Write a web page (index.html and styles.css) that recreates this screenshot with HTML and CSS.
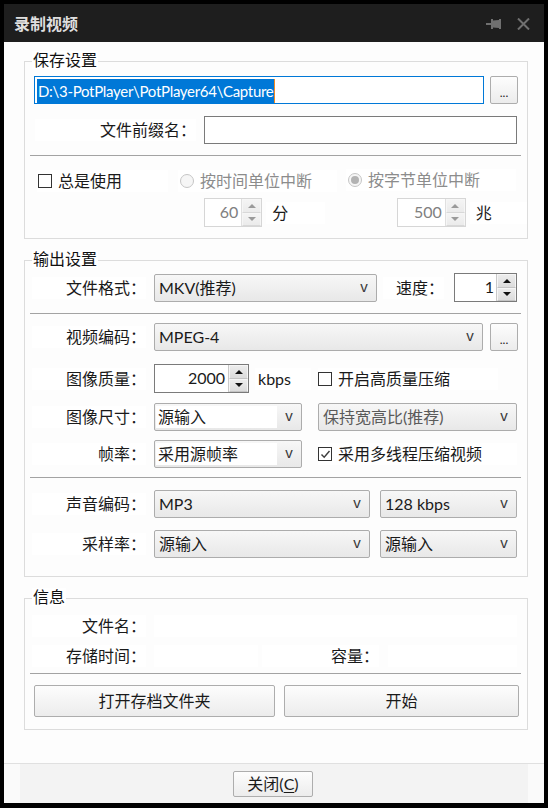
FILE: index.html
```html
<!DOCTYPE html>
<html lang="zh-CN">
<head>
<meta charset="utf-8">
<title>录制视频</title>
<link rel="stylesheet" href="styles.css">
</head>
<body>
<div class="window">
  <div class="titlebar">
    <span class="title">录制视频</span>
    <div class="title-icons">
      <svg class="pin" width="16" height="10" viewBox="0 0 16 10">
        <rect x="0" y="4" width="6" height="2" fill="#707070"/>
        <rect x="5" y="0" width="2" height="10" fill="#707070"/>
        <polygon points="7,1.5 13,1 13,9 7,8.5" fill="#707070"/>
        <rect x="13" y="0" width="2" height="10" fill="#707070"/>
      </svg>
      <svg class="xbtn" width="13" height="12" viewBox="0 0 13 12">
        <path d="M1 0.5 L12 11.5 M12 0.5 L1 11.5" stroke="#707070" stroke-width="2" fill="none"/>
      </svg>
    </div>
  </div>

  <div class="content">
    <section class="group g-save">
      <div class="group-title">保存设置</div>
      <div class="row r-path">
        <div class="textbox path"><span class="sel">D:\3-PotPlayer\PotPlayer64\Capture</span></div>
        <div class="btn dots">...</div>
      </div>
      <div class="row r-prefix">
        <span class="lbl-prefix">文件前缀名：</span>
        <div class="textbox prefix"></div>
      </div>
      <div class="sep"></div>
      <div class="row r-opts">
        <div class="check c-always"><span class="cbox"></span><span>总是使用</span></div>
        <div class="radio disabled r-time"><span class="rcircle"></span><span>按时间单位中断</span></div>
        <div class="radio disabled checked r-byte"><span class="rcircle"><span class="dot"></span></span><span>按字节单位中断</span></div>
      </div>
      <div class="row r-spins">
        <div class="spin disabled s60"><span class="val">60</span><span class="arrows"><span class="up"></span><span class="down"></span></span></div>
        <span class="unit">分</span>
        <div class="spin disabled s500"><span class="val">500</span><span class="arrows"><span class="up"></span><span class="down"></span></span></div>
        <span class="unit">兆</span>
      </div>
    </section>

    <section class="group g-out">
      <div class="group-title">输出设置</div>
      <div class="row h29">
        <span class="lbl">文件格式：</span>
        <div class="combo w223"><span class="txt">MKV(推荐)</span><span class="arrow">v</span></div>
        <span class="lbl-speed">速度：</span>
        <div class="spin s-speed"><span class="val">1</span><span class="arrows"><span class="up"></span><span class="down"></span></span></div>
      </div>
      <div class="sep s1"></div>
      <div class="row r-vcodec">
        <span class="lbl">视频编码：</span>
        <div class="combo w329"><span class="txt">MPEG-4</span><span class="arrow">v</span></div>
        <div class="btn dots">...</div>
      </div>
      <div class="row h29 r-quality">
        <span class="lbl">图像质量：</span>
        <div class="spin s-quality"><span class="val">2000</span><span class="arrows"><span class="up"></span><span class="down"></span></span></div>
        <span class="unit-kbps">kbps</span>
        <div class="check"><span class="cbox"></span><span>开启高质量压缩</span></div>
      </div>
      <div class="row r-size">
        <span class="lbl">图像尺寸：</span>
        <div class="combo editable w148"><span class="txt">源输入</span><span class="arrow">v</span></div>
        <div class="combo w199 ml16 dim"><span class="txt">保持宽高比(推荐)</span><span class="arrow">v</span></div>
      </div>
      <div class="row r-fps">
        <span class="lbl">帧率：</span>
        <div class="combo editable w148"><span class="txt">采用源帧率</span><span class="arrow">v</span></div>
        <div class="check ml16"><span class="cbox checked"><svg width="11" height="11" viewBox="0 0 11 11"><path d="M1.5 5.5 L4.2 8.3 L9.5 2" stroke="#3c3c3c" stroke-width="1.4" fill="none"/></svg></span><span>采用多线程压缩视频</span></div>
      </div>
      <div class="sep s2"></div>
      <div class="row r-acodec">
        <span class="lbl">声音编码：</span>
        <div class="combo w216"><span class="txt">MP3</span><span class="arrow">v</span></div>
        <div class="combo w137 ml10"><span class="txt">128 kbps</span><span class="arrow">v</span></div>
      </div>
      <div class="row r-rate">
        <span class="lbl">采样率：</span>
        <div class="combo w216"><span class="txt">源输入</span><span class="arrow">v</span></div>
        <div class="combo w137 ml10"><span class="txt">源输入</span><span class="arrow">v</span></div>
      </div>
    </section>

    <section class="group g-info">
      <div class="group-title">信息</div>
      <div class="row r-info1">
        <span class="lbl">文件名：</span>
        <span class="value v-name"></span>
      </div>
      <div class="row r-info2">
        <span class="lbl">存储时间：</span>
        <span class="value v-time"></span>
        <span class="lbl-size">容量：</span>
        <span class="value v-size"></span>
      </div>
      <div class="sep s3"></div>
      <div class="row r-buttons">
        <div class="btn big b-open">打开存档文件夹</div>
        <div class="btn big b-start">开始</div>
      </div>
    </section>
  </div>

  <div class="footer">
    <div class="footer-inner">
      <div class="btn close-btn">关闭(<u>C</u>)</div>
    </div>
  </div>
</div>
</body>
</html>
```

FILE: styles.css
```css
* { box-sizing: border-box; }
html, body { margin: 0; padding: 0; }
body {
  background: #000;
  width: 548px;
  height: 808px;
  overflow: hidden;
  font-family: Lato, "Noto Sans CJK SC", sans-serif;
  font-size: 16px;
  color: #1a1a1a;
}

.window {
  margin: 4px 0 0 4px;
  width: 540px;
  height: 799px;
  background: #fdfdfd;
  display: flex;
  flex-direction: column;
}

/* title bar */
.titlebar {
  height: 38px;
  flex: none;
  background: #1e1e1e;
  display: flex;
  align-items: center;
  justify-content: space-between;
  padding: 0 14px 0 10px;
}
.title {
  color: #dedede;
  font-weight: bold;
  font-size: 16px;
  line-height: 20px;
  margin-top: 1px;
}
.title-icons { display: flex; align-items: center; gap: 15px; margin-top: 2px; }
.pin, .xbtn { display: block; }

/* content */
.content {
  flex: 1;
  padding: 19px 16px 0 20px;
}

.group {
  position: relative;
  border: 1px solid #dcdcdc;
}
.group-title {
  position: absolute;
  left: 7px;
  top: -11px;
  line-height: 18px;
  padding: 0 1px;
  background: #fff;
  color: #111;
}
.g-save { padding: 14px 0 11px 0; }
.g-out { margin-top: 21px; padding: 12px 0 18px 0; }
.g-info { margin-top: 21px; padding: 16px 0 12px 0; }

.row { display: flex; align-items: center; height: 28px; }
.h29 { height: 29px; }

.sep {
  height: 1px;
  background: #a3a3a3;
  margin: 11px 6px 0 5px;
}

/* common labels */
.lbl {
  width: 114px;
  margin: 0 8px 0 7px;
  text-align: right;
  background: #fff;
  line-height: 22px;
  white-space: nowrap;
}

/* text boxes */
.textbox {
  height: 28px;
  border: 1px solid #7a7a7a;
  background: #fff;
}
.path {
  width: 450px;
  margin-left: 9px;
  border-color: #0078d7;
  padding: 1px 0 0 2px;
  display: flex;
  align-items: center;
}
.sel {
  background: #0078d7;
  color: #fff;
  font-size: 15px;
  letter-spacing: -0.3px;
  line-height: 24px;
  padding: 0 1px 0 1px;
  border-right: 1px solid #f08a24;
  white-space: nowrap;
}

/* buttons */
.btn {
  border: 1px solid #adadad;
  border-radius: 2px;
  background: linear-gradient(#fdfdfd, #ececec);
  text-align: center;
  color: #1a1a1a;
}
.dots {
  width: 28px;
  height: 28px;
  margin-left: 6px;
  font-size: 12px;
  line-height: 12px;
  padding-top: 10px;
  color: #222;
}
.r-vcodec .dots { margin-left: 7px; height: 28px; }

/* group 1 rows */
.r-prefix { margin-top: 12px; }
.lbl-prefix {
  width: 161px;
  margin: 0 8px 0 10px;
  text-align: right;
  background: #fff;
  line-height: 22px;
}
.prefix { width: 313px; }

.r-opts { height: 22px; margin-top: 14px; }
.check { display: flex; align-items: center; background: #fff; line-height: 22px; height: 22px; }
.cbox {
  width: 14px;
  height: 14px;
  border: 1px solid #333;
  background: #fff;
  margin-right: 6px;
  flex: none;
  display: flex;
  align-items: center;
  justify-content: center;
}
.cbox.checked svg { display: block; }
.c-always { width: 131px; margin-left: 12px; padding-left: 1px; }

.radio { display: flex; align-items: center; background: #fff; line-height: 22px; height: 22px; }
.radio.disabled { color: #8c8c8c; }
.rcircle {
  width: 14px;
  height: 14px;
  border-radius: 50%;
  border: 1px solid #c6c6c6;
  background: #f6f6f6;
  margin-right: 6px;
  flex: none;
  display: flex;
  align-items: center;
  justify-content: center;
}
.dot { width: 8px; height: 8px; border-radius: 50%; background: #b3b3b3; }
.r-time { width: 159px; margin-left: 10px; padding-left: 2px; }
.r-byte { width: 170px; margin-left: 9px; padding-left: 2px; margin-top: -3px; }

.r-spins { height: 29px; margin-top: 6px; }

/* spinners */
.spin {
  display: flex;
  height: 29px;
  border: 1px solid #7a7a7a;
  background: #fff;
}
.spin .val {
  flex: 1;
  text-align: right;
  padding-right: 3px;
  line-height: 26px;
}
.spin .arrows {
  width: 20px;
  flex: none;
  display: flex;
  flex-direction: column;
  border-left: 1px solid #c9c9c9;
}
.spin .arrows span {
  flex: 1;
  background: linear-gradient(#ececec, #dcdcdc);
  border: 1px solid #f6f6f6;
  border-bottom-color: #c4c4c4;
  display: flex;
  align-items: center;
  justify-content: center;
}
.spin .arrows span::before {
  content: "";
  border-left: 4px solid transparent;
  border-right: 4px solid transparent;
}
.spin .arrows .up::before { border-bottom: 4px solid #111; }
.spin .arrows .down::before { border-top: 4px solid #111; }

.spin.disabled { border-color: #d6d6d6; }
.spin.disabled .val { color: #808080; }
.spin.disabled .arrows { border-left-color: #e0e0e0; }
.spin.disabled .arrows span { background: linear-gradient(#f4f4f4, #ebebeb); border-bottom-color: #d8d8d8; }
.spin.disabled .arrows .up::before { border-bottom-color: #9a9a9a; }
.spin.disabled .arrows .down::before { border-top-color: #9a9a9a; }

.s60 { width: 68px; margin-left: 179px; }
.s500 { width: 80px; margin-left: 72px; }
.unit { margin-left: 4px; padding-left: 6px; background: #fff; line-height: 22px; }
.r-spins .unit:nth-of-type(1) { width: 68px; }
.r-spins .unit:last-child { width: 66px; }

/* combos */
.combo {
  height: 28px;
  border: 1px solid #acacac;
  border-radius: 2px;
  background: linear-gradient(#f7f7f7, #e8e8e8);
  display: flex;
  align-items: stretch;
  flex: none;
}
.combo .txt {
  flex: 1;
  padding-left: 4px;
  line-height: 26px;
  white-space: nowrap;
  overflow: hidden;
}
.combo .arrow {
  width: 24px;
  flex: none;
  text-align: center;
  font-family: "Liberation Sans", sans-serif;
  font-size: 15px;
  line-height: 24px;
  color: #3a3a3a;
}
.combo.editable .txt {
  background: #fff;
  margin: 2px 0 2px 1px;
  padding-left: 2px;
  line-height: 22px;
}
.combo.dim .txt { color: #5a5a5a; }

.w223 { width: 223px; }
.w329 { width: 329px; }
.w148 { width: 148px; }
.w199 { width: 199px; }
.w216 { width: 216px; }
.w137 { width: 137px; }
.ml16 { margin-left: 16px; }
.ml10 { margin-left: 10px; }

/* group 2 rows */
.lbl-speed {
  width: 61px;
  margin-left: 6px;
  text-align: right;
  background: #fff;
  line-height: 22px;
}
.s-speed { width: 63px; margin-left: 10px; }
.s-speed .val { padding-right: 2px; }

.sep.s1 { margin-top: 11px; }
.r-vcodec { margin-top: 9px; }
.r-quality { margin-top: 13px; }
.s-quality { width: 95px; }
.unit-kbps {
  width: 56px;
  margin-left: 6px;
  padding-left: 3px;
  background: #fff;
  line-height: 22px;
}
.r-quality .check { margin-left: 7px; width: 180px; }
.r-size { margin-top: 10px; }
.r-fps { margin-top: 9px; }
.r-fps .check { width: 199px; }
.sep.s2 { margin-top: 9px; }
.r-acodec { margin-top: 12px; }
.r-rate { margin-top: 12px; }

/* group 3 */
.r-info1, .r-info2 { height: 22px; }
.r-info2 { margin-top: 8px; }
.value { background: #fff; height: 22px; }
.v-name { width: 363px; }
.v-time { width: 104px; }
.lbl-size {
  width: 117px;
  margin: 0 9px 0 4px;
  text-align: right;
  background: #fff;
  line-height: 22px;
}
.v-size { width: 129px; }
.sep.s3 { margin-top: 6px; }
.r-buttons { height: 32px; margin-top: 11px; }
.btn.big { height: 32px; line-height: 30px; }
.b-open { width: 241px; margin-left: 9px; }
.b-start { width: 235px; margin-left: 9px; }

/* footer */
.footer {
  height: 40px;
  flex: none;
  border-top: 1px solid #e0e0e0;
  background: #fafafa;
}
.footer-inner {
  margin: 0 16px;
  height: 100%;
  background: #f3f3f3;
  display: flex;
  justify-content: center;
  padding-top: 7px;
}
.close-btn {
  width: 80px;
  height: 26px;
  line-height: 24px;
  margin-right: 2px;
}
.close-btn u { text-decoration: underline; text-underline-offset: 2px; }
```
